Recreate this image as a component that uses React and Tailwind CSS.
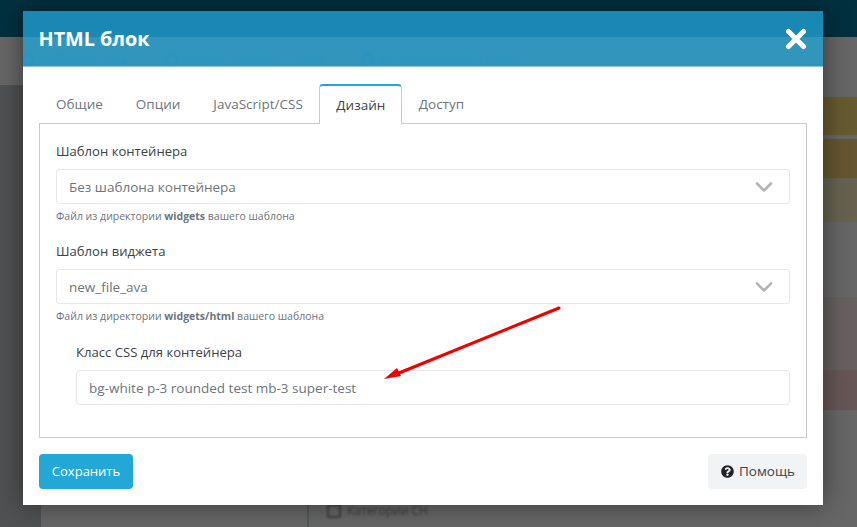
import { FaQuestionCircle } from 'react-icons/fa';

const tabs = ['Общие', 'Опции', 'JavaScript/CSS', 'Дизайн', 'Доступ'];

function Backdrop() {
  return (
    <div className="flex h-full flex-col bg-[#666]">
      <div className="h-[37px] shrink-0 bg-[#03303f]" />
      <div className="flex h-[48px] shrink-0 items-center gap-[38px] pl-[22px] pb-[3px] text-[13px] leading-none text-[#35637a] blur-[1px]">
        <span className="flex items-center gap-[4px]"><i className="size-[13px] rounded-full border-2 border-[#35637a]" />Добавить вид</span>
        <span className="flex items-center gap-[4px]"><i className="size-[13px] rounded-full border-2 border-[#35637a]" />Импортировать схему</span>
        <span className="flex items-center gap-[4px]"><i className="size-[13px] rounded-full border-2 border-[#35637a]" />Экспортировать схему</span>
      </div>
      <div className="flex min-h-0 flex-1">
        <div className="w-[41px] shrink-0 bg-[#505152]" />
        <div className="w-[268px] shrink-0 border-r-2 border-[#4e5a58]" />
        <div className="flex flex-1 flex-col">
          <div className="h-[12px]" />
          <div className="h-[38px] bg-[#665a30]" />
          <div className="h-[4px]" />
          <div className="h-[39px] bg-[#645630]" />
          <div className="h-[44px] bg-[#66624f]" />
          <div className="h-[75px]" />
          <div className="h-[33px] bg-[#666060]" />
          <div className="h-[40px] bg-[#666060]" />
          <div className="h-[40px] bg-[#665656]" />
          <div className="mt-[92px] flex items-center gap-[6px] pl-[18px] text-[12px] text-[#3c3c3c] blur-[0.8px]">
            <i className="size-[14px] rounded-[2px] border-2 border-[#3f3f3f]" />
            Категории СН
          </div>
        </div>
      </div>
    </div>
  );
}

function Chevron() {
  return (
    <svg width="18" height="12" viewBox="0 0 18 12" fill="none" stroke="#b4b4b4" strokeWidth="2.6" strokeLinecap="round" strokeLinejoin="round">
      <path d="M2 2.5 L9 9.5 L16 2.5" />
    </svg>
  );
}

function SelectField({ label, value, bold, rest }) {
  return (
    <div>
      <div className="mb-[8px] h-[20px] text-[13.1px] leading-[20px] text-[#3b4248]">{label}</div>
      <div className="flex h-[35px] items-center justify-between rounded-[3px] border border-[#e5e7e9] pl-[12px] pr-[16px] text-[#6c757d]">
        <span className="pt-[2px]">{value}</span>
        <Chevron />
      </div>
      <div className="mt-[4px] h-[17px] text-[10.5px] leading-[17px] text-[#6c757d]">
        Файл из директории <b>{bold}</b> {rest}
      </div>
    </div>
  );
}

export default function App() {
  return (
    <div className="relative h-[527px] w-[857px] overflow-hidden font-['Open_Sans',sans-serif] text-[13.5px]">
      <Backdrop />

      <div className="absolute left-[23px] top-[11px] flex h-[494px] w-[800px] flex-col shadow-[0_0_24px_rgba(0,0,0,0.45)]">
        <div className="flex h-[56px] shrink-0 items-center justify-between border-b border-[#8fc6dc] bg-[#22a6d9]/75 pl-[15.5px] pr-[16px]">
          <h2 className="text-[19.8px] font-bold text-white">HTML блок</h2>
          <svg width="22" height="22" viewBox="0 0 22 22" stroke="#fff" strokeWidth="5" strokeLinecap="round">
            <path d="M3.5 3.5 L18.5 18.5 M18.5 3.5 L3.5 18.5" />
          </svg>
        </div>

        <div className="flex min-h-0 flex-1 flex-col bg-white px-[16px]">
          <div className="mt-[17px] flex h-[39px] shrink-0 pl-[0.5px]">
            {tabs.map((tab) =>
              tab === 'Дизайн' ? (
                <div key={tab} className="relative z-10 -mb-px flex items-center rounded-t-[4px] border border-b-0 border-[#c8cbce] border-t-[#22a6d6] border-t-2 bg-white px-[16px] pt-[1px] text-[#3b4248]">
                  {tab}
                </div>
              ) : (
                <div key={tab} className="flex items-center px-[16.5px] pt-[2px] text-[#6c757d]">
                  {tab}
                </div>
              )
            )}
          </div>

          <div className="h-[315px] shrink-0 border border-[#c8cbce] px-[16px] pt-[17px]">
            <div className="flex flex-col gap-[16px]">
              <SelectField label="Шаблон контейнера" value="Без шаблона контейнера" bold="widgets" rest="вашего шаблона" />
              <SelectField label="Шаблон виджета" value="new_file_ava" bold="widgets/html" rest="вашего шаблона" />
            </div>
            <div className="mt-[17px] pl-[20px]">
              <div className="mb-[8px] h-[20px] text-[13.1px] leading-[20px] text-[#3b4248]">Класс CSS для контейнера</div>
              <div className="flex h-[35px] items-center rounded-[4px] border border-[#e5e7e9] pl-[12px] pt-[2px] text-[#6c757d]">
                bg-white p-3 rounded test mb-3 super-test
              </div>
            </div>
          </div>

          <div className="mt-[16px] flex items-start justify-between">
            <button className="h-[35px] w-[94px] rounded-[4px] bg-[#22a7d6] text-[13px] font-medium text-white">Сохранить</button>
            <button className="flex h-[35px] w-[99px] items-center justify-center gap-[5px] rounded-[4px] bg-[#f1f3f4] pl-[1px] text-[#3b4248]">
              <FaQuestionCircle className="size-[13px] text-[#212529]" />
              Помощь
            </button>
          </div>
        </div>
      </div>

      <svg className="absolute left-[380px] top-[304px]" width="184" height="80" viewBox="0 0 184 80" fill="none">
        <path d="M179 4 L19 69" stroke="#f20000" strokeWidth="3" strokeLinecap="round" />
        <path d="M4 75 L17 64 L21 72 Z" fill="#f20000" />
      </svg>
    </div>
  );
}
